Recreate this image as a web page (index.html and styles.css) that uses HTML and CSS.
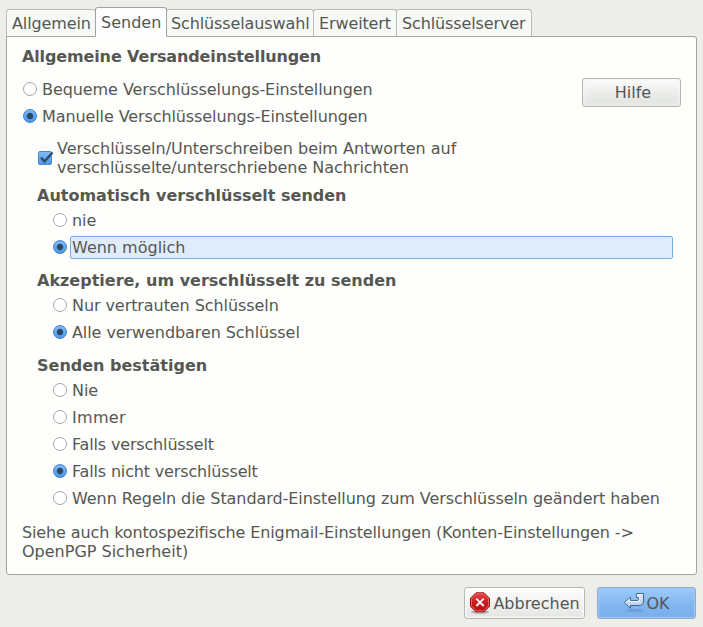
FILE: index.html
```html
<!DOCTYPE html>
<html lang="de">
<head>
<meta charset="utf-8">
<title>Enigmail-Einstellungen</title>
<link rel="stylesheet" href="styles.css">
</head>
<body>
<nav class="tabs">
  <div class="tab tab-general">Allgemein</div>
  <div class="tab tab-send selected">Senden</div>
  <div class="tab tab-keys">Schlüsselauswahl</div>
  <div class="tab tab-advanced">Erweitert</div>
  <div class="tab tab-server">Schlüsselserver</div>
</nav>
<main class="panel">
  <h1>Allgemeine Versandeinstellungen</h1>
  <div class="top">
    <div class="modes">
      <div class="option"><i class="radio"></i><span>Bequeme Verschlüsselungs-Einstellungen</span></div>
      <div class="option"><i class="radio on"></i><span class="snug">Manuelle Verschlüsselungs-Einstellungen</span></div>
    </div>
    <div class="button help">Hilfe</div>
  </div>
  <div class="check-row">
    <svg class="check" width="17" height="16" viewBox="0 0 17 16">
      <defs><linearGradient id="cb" x1="0" y1="0" x2="0" y2="1"><stop offset="0" stop-color="#82bcf8"/><stop offset="1" stop-color="#4f98e6"/></linearGradient></defs>
      <rect x="1.5" y="1.5" width="13" height="13" rx="1.5" fill="url(#cb)" stroke="#4689d0"/>
      <path d="M4 7.5 L7.5 11.5 L15.5 2.5" fill="none" stroke="#2e4964" stroke-width="2.2"/>
    </svg>
    <span>Verschlüsseln/Unterschreiben beim Antworten auf<br>verschlüsselte/unterschriebene Nachrichten</span>
  </div>
  <section class="group">
    <h2>Automatisch verschlüsselt senden</h2>
    <div class="option"><i class="radio"></i><span>nie</span></div>
    <div class="option"><i class="radio on"></i><span class="focused">Wenn möglich</span></div>
  </section>
  <section class="group">
    <h2>Akzeptiere, um verschlüsselt zu senden</h2>
    <div class="option"><i class="radio"></i><span>Nur vertrauten Schlüsseln</span></div>
    <div class="option"><i class="radio on"></i><span>Alle verwendbaren Schlüssel</span></div>
  </section>
  <section class="group">
    <h2>Senden bestätigen</h2>
    <div class="option"><i class="radio"></i><span>Nie</span></div>
    <div class="option"><i class="radio"></i><span class="wide">Immer</span></div>
    <div class="option"><i class="radio"></i><span class="tight">Falls verschlüsselt</span></div>
    <div class="option"><i class="radio on"></i><span class="tight">Falls nicht verschlüsselt</span></div>
    <div class="option"><i class="radio"></i><span>Wenn Regeln die Standard-Einstellung zum Verschlüsseln geändert haben</span></div>
  </section>
  <p class="note"><span class="note-lead">Siehe auch kontospezifische Enigmail-Einstellungen (Konten-Einstellungen -&gt;</span><br>OpenPGP Sicherheit)</p>
</main>
<footer class="actions">
  <div class="button cancel">
    <svg width="22" height="22" viewBox="0 0 22 22">
      <defs><linearGradient id="red" x1="0" y1="0" x2="0" y2="1"><stop offset="0" stop-color="#e24545"/><stop offset=".5" stop-color="#cc1c1e"/><stop offset="1" stop-color="#bd0b10"/></linearGradient></defs>
      <ellipse cx="11" cy="20" rx="9" ry="1.7" fill="#555" opacity=".4"/>
      <path d="M7 .8h8l5.5 5.5v8L15 19.8H7l-5.5-5.5v-8z" fill="url(#red)" stroke="#9f1015"/>
      <path d="M7.4 1.8h7.2l4.9 4.9v7.2l-4.9 4.9H7.4l-4.9-4.9V6.7z" fill="none" stroke="#ef7777" stroke-width=".8"/>
      <path d="M7.3 6.6l7.4 7.4M14.7 6.6L7.3 14" stroke="#fff" stroke-width="1.8"/>
    </svg><span>Abbrechen</span>
  </div>
  <div class="button ok">
    <svg width="22" height="22" viewBox="0 0 22 22">
      <defs><linearGradient id="arrow" x1="0" y1="0" x2="0" y2="1"><stop offset="0" stop-color="#dce7f3"/><stop offset="1" stop-color="#b5cce6"/></linearGradient></defs>
      <ellipse cx="12" cy="18.5" rx="9" ry="1.8" fill="#557fae" opacity=".35"/>
      <path d="M1.2 10.7L7.5 5.2V8.5H14.5Q15.8 8.5 15.8 7V5.5H13.5V1.5H20.5V9Q20.5 13.5 16 13.5H7.5V16.2z" fill="url(#arrow)" stroke="#3f6899" stroke-linejoin="round"/>
      <path d="M2.7 10.6L6.6 7.2V9.5H14.8Q16.8 9.5 16.8 7V4.5H14.5V2.5H19.5" fill="none" stroke="#fff" stroke-width=".8"/>
    </svg><span>OK</span>
  </div>
</footer>
</body>
</html>
```
FILE: styles.css
```css
* { box-sizing: border-box; }
body {
  margin: 0;
  padding: 7px 6px 0;
  height: 627px;
  overflow: hidden;
  background: #edeeea;
  color: #555753;
  font: 16px/19px "DejaVu Sans", sans-serif;
  font-variant-ligatures: none;
  white-space: nowrap;
}
.tabs { display: flex; align-items: flex-end; height: 30px; letter-spacing: -0.12px; }
.tab {
  height: 28px;
  padding: 4px 0 0 4px;
  margin-right: -1px;
  border: 1px solid #b9bcb7;
  border-bottom-color: #a2a59f;
  border-radius: 3px 3px 0 0;
  background: #f7f9f7;
}
.tab.selected {
  position: relative;
  height: 30px;
  padding: 5px 0 0 5px;
  border-color: #a2a59f;
  border-bottom-color: #fefefe;
  background: #fefefe;
  letter-spacing: 0;
}
.tab-general { width: 90px; padding-left: 5px; }
.tab-send { width: 72px; }
.tab-keys { width: 148px; }
.tab-advanced { width: 84px; padding-left: 5px; }
.tab-server { width: 136px; padding-left: 5px; }
.panel {
  width: 691px;
  height: 539px;
  margin-top: -1px;
  padding: 10px 15px 0;
  border: 1px solid #a2a59f;
  border-radius: 0 3px 3px 3px;
  background: #fefefd;
}
h1, h2 { margin: 0; font-size: 16px; line-height: 19px; font-weight: bold; }
h1 { letter-spacing: -0.13px; }
.top { display: flex; justify-content: space-between; margin-top: 10px; }
.option { display: flex; align-items: center; height: 27px; letter-spacing: -0.075px; }
.option span { flex: 1; height: 23px; padding: 1px; border: 1px solid transparent; border-radius: 2px; }
.option .focused { border-color: #71aee9; background: #e0ecfc; letter-spacing: 0; }
.option .snug { letter-spacing: -0.1px; }
.option .tight { letter-spacing: -0.16px; }
.option .wide { letter-spacing: 0.3px; }
.radio {
  flex: none;
  width: 14px;
  height: 14px;
  margin: 0 3px 2px 1px;
  border: 1px solid #a5a7a3;
  border-radius: 50%;
  background: #fff;
}
.radio.on {
  border-color: #3e82cb;
  background: radial-gradient(circle at 50% 50%, #29496b 0 2.7px, transparent 3.7px), linear-gradient(#7fbafa, #4c96e6);
}
.button {
  display: flex;
  align-items: center;
  justify-content: center;
  border: 1px solid #b4b6b2;
  border-radius: 3px;
  background: linear-gradient(#fdfefd, #f0f1ef 55%, #e3e5e2);
  box-shadow: inset 0 0 2px 1px #fff;
}
.help { width: 99px; height: 29px; margin-top: 2px; padding-left: 3px; background: linear-gradient(#fcfdfc, #edefec 45%, #dfe1de); box-shadow: inset 0 0 4px 1px #f6f7f5; }
.check-row { display: flex; margin: 9px 0 0 15px; letter-spacing: -0.035px; }
.check { flex: none; margin: 11px 3px 0 0; }
.group { padding: 9px 8px 0 30px; }
.group + .group { padding-top: 10px; }
h2 { margin: 0 0 2px -15px; }
.note { margin: 11px 0 0; }
.note-lead { letter-spacing: -0.12px; }
.actions { display: flex; justify-content: flex-end; gap: 12px; margin: 12px 1px 0 0; }
.actions .button { height: 32px; }
.cancel { width: 121px; }
.cancel span { margin-left: 2px; }
.ok { width: 99px; border-color: #91a9c5; background: linear-gradient(#9dcafa, #80b5ef 60%, #78afea); box-shadow: inset 0 0 1px 1px #9fcbfa; }
.ok span { margin-left: 1px; }
```
